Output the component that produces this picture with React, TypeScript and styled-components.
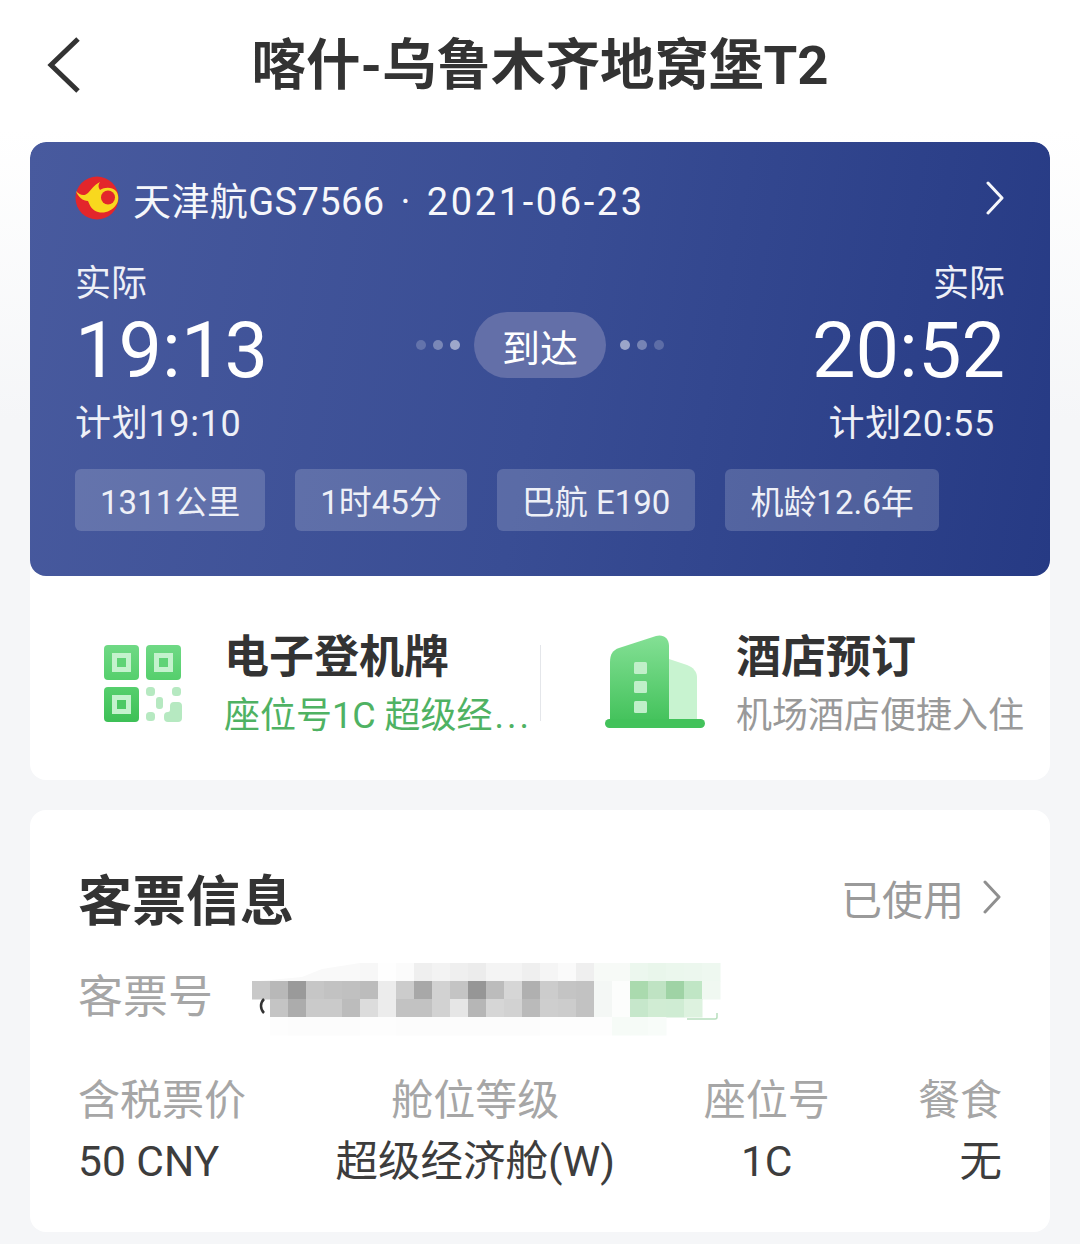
import React from 'react';
import styled, { createGlobalStyle } from 'styled-components';

const GlobalStyle = createGlobalStyle`
  html, body {
    margin: 0;
    padding: 0;
    background: #f5f6f8;
  }
  * {
    box-sizing: border-box;
  }
  body {
    font-family: Roboto, "Noto Sans CJK SC", sans-serif;
  }
`;

const Page = styled.div`
  width: 1080px;
  height: 1244px;
  overflow: hidden;
  display: flex;
  flex-direction: column;
  background: linear-gradient(#ffffff 0, #ffffff 130px, #f5f6f8 420px);
`;

const TopBar = styled.header`
  height: 142px;
  padding: 0 30px 12px 46px;
  display: flex;
  align-items: center;
`;

const BackIcon = styled.svg`
  flex: none;
  width: 38px;
  height: 58px;
`;

const Title = styled.h1`
  flex: 1;
  margin: 0 0 0 -54px;
  text-align: center;
  font-size: 54.5px;
  line-height: 60px;
  font-weight: 700;
  color: #333333;
`;

const Content = styled.main`
  margin: 0 30px;
  display: flex;
  flex-direction: column;
  gap: 30px;
`;

const FlightCard = styled.section`
  background: #ffffff;
  border-radius: 16px;
  overflow: hidden;
`;

const BluePanel = styled.div`
  height: 434px;
  padding: 32px 45px 45px;
  border-radius: 16px;
  background: linear-gradient(100deg, #485a9e 0%, #394d94 50%, #263a84 100%);
  color: #ffffff;
  display: flex;
  flex-direction: column;
`;

const FlightRow = styled.div`
  height: 48px;
  display: flex;
  align-items: center;
  gap: 14px;
  font-size: 38px;
  font-weight: 400;
  letter-spacing: 0.4px;
  color: #f6f7fb;
`;

const FlightText = styled.span`
  flex: 1;
`;

const FlightSep = styled.span`
  margin: 0 16px;
`;

const FlightDate = styled.span`
  letter-spacing: 2.6px;
`;

const Chevron = styled.svg`
  flex: none;
  width: 20px;
  height: 34px;
`;

const TimesRow = styled.div`
  margin-top: 40px;
  display: flex;
  align-items: center;
  justify-content: space-between;
`;

const TimeBlock = styled.div<{ $right?: boolean }>`
  width: 240px;
  display: flex;
  flex-direction: column;
  align-items: ${({ $right }) => ($right ? 'flex-end' : 'flex-start')};
`;

const TimeLabel = styled.div`
  font-size: 36px;
  line-height: 44px;
  font-weight: 400;
  color: #eef0f7;
`;

const TimeValue = styled.div`
  margin-top: 4px;
  font-size: 77.5px;
  line-height: 82px;
  font-weight: 400;
`;

const PlanLabel = styled.div<{ $right?: boolean }>`
  margin-top: 10px;
  margin-right: ${({ $right }) => ($right ? '10px' : '0')};
  font-size: 36px;
  line-height: 44px;
  font-weight: 400;
  letter-spacing: 0.7px;
  color: #eef0f7;
`;

const StatusGroup = styled.div`
  display: flex;
  align-items: center;
  gap: 14px;
  margin-bottom: 18px;
`;

const Dots = styled.div`
  display: flex;
  gap: 7px;
`;

const Dot = styled.i<{ $alpha: number }>`
  display: block;
  width: 10px;
  height: 10px;
  border-radius: 50%;
  background: rgba(255, 255, 255, ${({ $alpha }) => $alpha});
`;

const StatusPill = styled.div`
  width: 132px;
  height: 66px;
  border-radius: 33px;
  background: #636fa8;
  display: flex;
  align-items: center;
  justify-content: center;
  font-size: 38px;
  font-weight: 400;
`;

const TagRow = styled.div`
  margin-top: 23px;
  display: flex;
  gap: 30px;
`;

const Tag = styled.div`
  height: 62px;
  padding: 0 25px;
  border-radius: 6px;
  background: rgba(255, 255, 255, 0.17);
  display: flex;
  align-items: center;
  font-size: 33px;
  font-weight: 400;
  color: #eef0f7;
`;

const ActionRow = styled.div`
  height: 204px;
  padding-top: 14px;
  display: flex;
  align-items: center;
`;

const ActionItem = styled.div<{ $wide?: boolean }>`
  width: ${({ $wide }) => ($wide ? '509px' : '510px')};
  display: flex;
  align-items: center;
  padding-left: ${({ $wide }) => ($wide ? '64px' : '73px')};
  gap: ${({ $wide }) => ($wide ? '31px' : '41px')};
`;

const Divider = styled.div`
  width: 1px;
  height: 76px;
  margin-top: -4px;
  background: #e4e6ea;
`;

const ActionText = styled.div`
  min-width: 0;
  display: flex;
  flex-direction: column;
  gap: 4px;
`;

const ActionTitle = styled.div`
  font-size: 45px;
  line-height: 58px;
  font-weight: 700;
  color: #333333;
  white-space: nowrap;
`;

const ActionSub = styled.div<{ $green?: boolean }>`
  font-size: 36px;
  line-height: 50px;
  font-weight: 400;
  color: ${({ $green }) => ($green ? '#4fb263' : '#999999')};
  white-space: nowrap;
`;

const Ellipsis = styled.span`
  letter-spacing: 3px;
  margin-left: 2px;
`;

const QrSvg = styled.svg`
  flex: none;
  margin-top: -2px;
`;

const HotelSvg = styled.svg`
  flex: none;
  margin-top: -8px;
`;

const TicketCard = styled.section`
  height: 422px;
  background: #ffffff;
  border-radius: 16px;
  padding: 54px 48px 0 48px;
  display: flex;
  flex-direction: column;
`;

const TicketHeader = styled.div`
  height: 66px;
  display: flex;
  align-items: center;
  justify-content: space-between;
`;

const TicketTitle = styled.h2`
  margin: 0;
  font-size: 54px;
  font-weight: 700;
  color: #333333;
`;

const TicketState = styled.div`
  display: flex;
  align-items: center;
  gap: 18px;
  font-size: 41px;
  font-weight: 400;
  color: #9a9a9a;
`;

const TicketNoRow = styled.div`
  margin-top: 33px;
  height: 60px;
  display: flex;
  align-items: center;
  position: relative;
`;

const TicketNoLabel = styled.div`
  font-size: 45px;
  font-weight: 400;
  color: #a6a6a6;
`;

const Mosaic = styled.svg`
  position: absolute;
  left: 174px;
  top: 0;
`;

const FieldGrid = styled.div`
  margin-top: 50px;
  display: flex;
  justify-content: space-between;
`;

const Field = styled.div<{ $align: string; $width: number }>`
  width: ${({ $width }) => $width}px;
  display: flex;
  flex-direction: column;
  align-items: ${({ $align }) => $align};
  white-space: nowrap;
`;

const FieldLabel = styled.div`
  font-size: 42px;
  line-height: 56px;
  font-weight: 400;
  color: #a6a6a6;
`;

const FieldValue = styled.div`
  margin-top: 5px;
  font-size: 42.5px;
  line-height: 56px;
  font-weight: 400;
  color: #3d3d3d;
`;

const RightChevron = ({ color }: { color: string }) => (
  <Chevron viewBox="0 0 20 34">
    <path d="M3 2l14 15L3 32" fill="none" stroke={color} strokeWidth="3" strokeLinecap="round" strokeLinejoin="round" />
  </Chevron>
);

const AirlineLogo = () => (
  <svg width="44" height="44" viewBox="0 0 44 44">
    <circle cx="22" cy="22" r="21.5" fill="#e3262b" />
    <path
      d="M1 15c4 5 9 5 12 2 3-3 6-8 12-11-2 3-2 5 0 8 5-3 12-3 16 1 3 4 3 10 0 14-4 6-12 9-18 7-6-2-8-6-10-11-5 0-10-4-12-10z"
      fill="#f8d81e"
    />
    <circle cx="33" cy="21.5" r="7" fill="#e3262b" />
  </svg>
);

const QrIcon = () => (
  <QrSvg width="80" height="80" viewBox="0 0 80 80">
    <defs>
      <linearGradient id="qrA" x1="0" y1="0" x2="0" y2="1">
        <stop offset="0" stopColor="#6fd985" />
        <stop offset="1" stopColor="#55cf6c" />
      </linearGradient>
      <linearGradient id="qrB" x1="0" y1="0" x2="0" y2="1">
        <stop offset="0" stopColor="#56cf6d" />
        <stop offset="1" stopColor="#3dc056" />
      </linearGradient>
    </defs>
    <rect x="1" y="1" width="35" height="35" rx="4" fill="url(#qrA)" />
    <rect x="43" y="1" width="35" height="35" rx="4" fill="url(#qrA)" />
    <rect x="1" y="43" width="35" height="35" rx="4" fill="url(#qrB)" />
    <rect x="9" y="9" width="19" height="19" fill="#c4f2cd" />
    <rect x="14" y="14" width="9" height="9" fill="#5fd376" />
    <rect x="51" y="9" width="19" height="19" fill="#c4f2cd" />
    <rect x="56" y="14" width="9" height="9" fill="#5fd376" />
    <rect x="9" y="51" width="19" height="19" fill="#c4f2cd" />
    <rect x="14" y="56" width="9" height="9" fill="#4cc964" />
    <g fill="#b6e9c1">
      <rect x="43" y="43" width="9" height="9" rx="3.5" />
      <rect x="69" y="43" width="9" height="9" rx="3.5" />
      <rect x="53" y="53" width="7" height="12" rx="3" />
      <rect x="43" y="68" width="9" height="9" rx="3.5" />
      <path d="M71 58h4a4 4 0 0 1 4 4v12a4 4 0 0 1-4 4H65a4 4 0 0 1-4-4v-2a4 4 0 0 1 4-4a2 2 0 0 0 2-2V62a4 4 0 0 1 4-4z" />
    </g>
  </QrSvg>
);

const HotelIcon = () => (
  <HotelSvg width="100" height="94" viewBox="0 0 100 94">
    <defs>
      <linearGradient id="hotelA" x1="0" y1="0" x2="0" y2="1">
        <stop offset="0" stopColor="#84e095" />
        <stop offset="1" stopColor="#43c25b" />
      </linearGradient>
    </defs>
    <path d="M64 25l18 6c6 2 10 7 10 12v45H64z" fill="#c8f3d0" />
    <path d="M5 28c0-8 3-12 9-14L51 2c7-2 13 2 13 10v76H5z" fill="url(#hotelA)" />
    <rect x="0" y="85" width="100" height="9" rx="4.5" fill="#43c25b" />
    <g fill="#c0efc9">
      <rect x="29" y="28" width="13" height="12" rx="1.5" />
      <rect x="29" y="47" width="13" height="12" rx="1.5" />
      <rect x="29" y="67" width="13" height="12" rx="1.5" />
    </g>
  </HotelSvg>
);

const mosaicRows = [
  { y: 0, start: 6, cells: ['f7f7f7', 'fefefe', 'fbfbfb', 'efefef', 'f3f3f3', 'efefef', 'ececec', 'f4f4f4', 'f4f4f4', 'efefef', 'f5f5f5', 'fafafa', 'efefef', 'f7faf7', 'f7faf7', 'ecf7ee', 'e9f6eb', 'ebf7ed', 'ecf7ee', 'eef8f0'] },
  { y: 18, start: 0, cells: ['c8c8c8', 'b8b8b8', '9a9a9a', 'c6c6c6', 'c2c2c2', 'c0c0c0', 'bcbcbc', 'ececec', 'cccccc', 'a8a8a8', 'd2d2d2', 'c4c4c4', '969696', 'bcbcbc', 'd6d6d6', 'b0b0b0', 'cccccc', 'c4c4c4', 'c2c2c2', 'f4f7f5', 'fcfdfc', 'aadaae', 'bfe3c3', '9fd3a5', 'c0e6c5', 'f0f8f1'] },
  { y: 36, start: 1, cells: ['c4c4c4', 'acacac', 'cacaca', 'cacaca', 'bcbcbc', 'dcdcdc', 'ececec', 'c2c2c2', 'c2c2c2', 'd2d2d2', 'e6e6e6', 'b6b6b6', 'd6d6d6', 'd2d2d2', 'bababa', 'cecece', 'cccccc', 'c2c2c2', 'f4f7f5', 'fcfdfc', 'c6e7cb', 'd0ecd3', 'cfecd3', 'ddf2df'] },
  { y: 54, start: 1, cells: ['fdfdfd', 'fcfcfc', 'fcfcfc', 'fcfcfc', 'fcfcfc', 'fdfdfd', 'fdfdfd', 'fcfcfc', 'fcfcfc', 'fcfcfc', 'fcfcfc', 'fcfcfc', 'fcfcfc', 'fcfcfc', 'fcfcfc', 'fdfdfd', 'fdfdfd', 'fdfdfd', 'fdfdfd', 'f6fbf7', 'f6fbf7', 'f8fcf9'] },
];

const TicketMosaic = () => (
  <Mosaic width="480" height="80" viewBox="0 0 480 80">
    <path d="M2 18.5h106V0L70 6 50 14z" fill="#f9f9f9" />
    {mosaicRows.map((row) =>
      row.cells.map((c, i) => (
        <rect key={`${row.y}-${i}`} x={(row.start + i) * 18} y={row.y} width="18.5" height="18.5" fill={`#${c}`} />
      )),
    )}
    <path d="M12 36c-4 4-4 10 0 14" fill="none" stroke="#333" strokeWidth="2.5" />
    <path d="M465 50v4a2 2 0 0 1-2 2h-28" fill="none" stroke="#b8dfbe" strokeWidth="1.5" />
  </Mosaic>
);

const trip = ['1311公里', '1时45分', '巴航 E190', '机龄12.6年'];

const fields = [
  { label: '含税票价', value: '50 CNY', align: 'flex-start', width: 169 },
  { label: '舱位等级', value: '超级经济舱(W)', align: 'center', width: 280 },
  { label: '座位号', value: '1C', align: 'center', width: 126 },
  { label: '餐食', value: '无', align: 'flex-end', width: 84 },
];

const App: React.FC = () => {
  return (
    <Page>
      <GlobalStyle />
      <TopBar>
        <BackIcon viewBox="0 0 38 58">
          <path d="M32 3L5 29l27 26" fill="none" stroke="#333333" strokeWidth="5" strokeLinejoin="miter" />
        </BackIcon>
        <Title>喀什-乌鲁木齐地窝堡T2</Title>
      </TopBar>

      <Content>
        <FlightCard>
          <BluePanel>
            <FlightRow>
              <AirlineLogo />
              <FlightText>
                天津航GS7566
                <FlightSep>·</FlightSep>
                <FlightDate>2021-06-23</FlightDate>
              </FlightText>
              <RightChevron color="#f6f7fb" />
            </FlightRow>
            <TimesRow>
              <TimeBlock>
                <TimeLabel>实际</TimeLabel>
                <TimeValue>19:13</TimeValue>
                <PlanLabel>计划19:10</PlanLabel>
              </TimeBlock>
              <StatusGroup>
                <Dots>
                  <Dot $alpha={0.2} />
                  <Dot $alpha={0.32} />
                  <Dot $alpha={0.5} />
                </Dots>
                <StatusPill>到达</StatusPill>
                <Dots>
                  <Dot $alpha={0.5} />
                  <Dot $alpha={0.32} />
                  <Dot $alpha={0.2} />
                </Dots>
              </StatusGroup>
              <TimeBlock $right>
                <TimeLabel>实际</TimeLabel>
                <TimeValue>20:52</TimeValue>
                <PlanLabel $right>计划20:55</PlanLabel>
              </TimeBlock>
            </TimesRow>
            <TagRow>
              {trip.map((t) => (
                <Tag key={t}>{t}</Tag>
              ))}
            </TagRow>
          </BluePanel>
          <ActionRow>
            <ActionItem>
              <QrIcon />
              <ActionText>
                <ActionTitle>电子登机牌</ActionTitle>
                <ActionSub $green>
                  座位号1C 超级经<Ellipsis>...</Ellipsis>
                </ActionSub>
              </ActionText>
            </ActionItem>
            <Divider />
            <ActionItem $wide>
              <HotelIcon />
              <ActionText>
                <ActionTitle>酒店预订</ActionTitle>
                <ActionSub>机场酒店便捷入住</ActionSub>
              </ActionText>
            </ActionItem>
          </ActionRow>
        </FlightCard>

        <TicketCard>
          <TicketHeader>
            <TicketTitle>客票信息</TicketTitle>
            <TicketState>
              已使用
              <RightChevron color="#8f8f8f" />
            </TicketState>
          </TicketHeader>
          <TicketNoRow>
            <TicketNoLabel>客票号</TicketNoLabel>
            <TicketMosaic />
          </TicketNoRow>
          <FieldGrid>
            {fields.map((f) => (
              <Field key={f.label} $align={f.align} $width={f.width}>
                <FieldLabel>{f.label}</FieldLabel>
                <FieldValue>{f.value}</FieldValue>
              </Field>
            ))}
          </FieldGrid>
        </TicketCard>
      </Content>
    </Page>
  );
};

export default App;
